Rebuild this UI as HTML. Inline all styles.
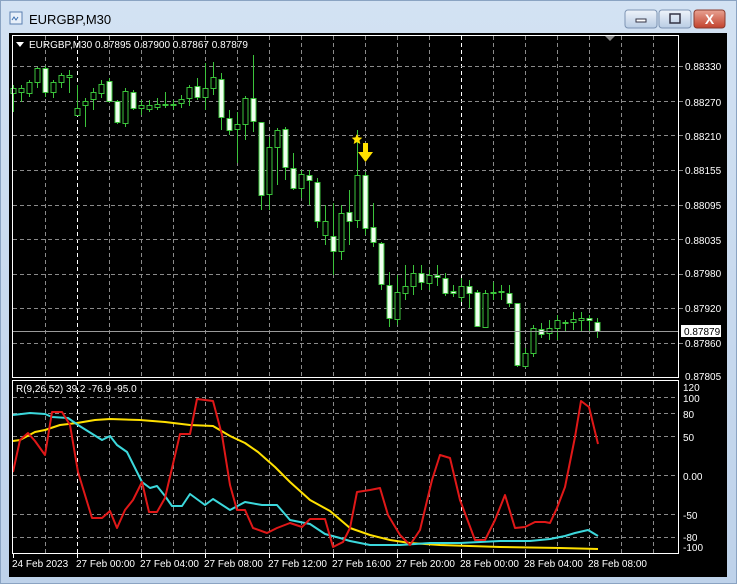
<!DOCTYPE html><html><head><meta charset="utf-8"><style>
html,body{margin:0;padding:0;background:#c6d7eb;width:737px;height:584px;overflow:hidden}
svg{display:block}
text{font-family:"Liberation Sans",sans-serif}
</style></head><body>
<svg id="s" width="737" height="584" viewBox="0 0 737 584" xmlns="http://www.w3.org/2000/svg">
<defs><linearGradient id="tb" x1="0" y1="0" x2="0" y2="1"><stop offset="0" stop-color="#d3e2f3"/><stop offset="1" stop-color="#bed2ea"/></linearGradient>
<linearGradient id="bt" x1="0" y1="0" x2="0" y2="1"><stop offset="0" stop-color="#eef3fa"/><stop offset="1" stop-color="#b9cce4"/></linearGradient>
<linearGradient id="cl" x1="0" y1="0" x2="0" y2="1"><stop offset="0" stop-color="#e8a393"/><stop offset="1" stop-color="#c2422d"/></linearGradient></defs>
<rect x="0" y="0" width="737" height="584" fill="url(#tb)"/>
<rect x="0.5" y="0.5" width="736" height="583" fill="none" stroke="#8aa3c2"/>
<rect x="10" y="12" width="12" height="12" fill="#e8f0fa" stroke="#5a7fb0"/>
<path d="M12 20 l2 -3 l2 3 l2 -3" stroke="#3b6fb0" fill="none"/>
<text x="29" y="24" font-size="13" fill="#000">EURGBP,M30</text>
<rect x="625" y="10" width="32" height="18" rx="3" fill="url(#bt)" stroke="#7d94b3"/>
<rect x="636" y="19" width="10" height="3" fill="#fff" stroke="#334"/>
<rect x="659" y="10" width="32" height="18" rx="3" fill="url(#bt)" stroke="#7d94b3"/>
<rect x="670" y="14" width="10" height="9" fill="none" stroke="#334" stroke-width="1.5"/>
<rect x="694" y="10" width="31" height="18" rx="3" fill="url(#cl)" stroke="#8b3b2e"/>
<text x="709.5" y="24" font-size="14" font-weight="bold" fill="#fff" text-anchor="middle">X</text>
<rect x="9" y="33" width="718" height="544" fill="#000"/>
<g id="grid" stroke="#8a8a8a" stroke-dasharray="4,3" stroke-width="1"></g>
<g id="ind" fill="none" stroke-width="2" stroke-linejoin="round"></g>
<g id="cand"></g>
<rect x="12.5" y="35.5" width="666" height="342" fill="none" stroke="#fff"/>
<rect x="12.5" y="380.5" width="666" height="173" fill="none" stroke="#fff"/>
<line x1="13" y1="331.5" x2="678" y2="331.5" stroke="#9a9a9a"/>
<path d="M16 42 h8 l-4 5z" fill="#fff"/>
<path d="M605 36 h10 l-5 5z" fill="#888"/>
<text x="29" y="48" font-size="10" fill="#fff">EURGBP,M30  0.87895 0.87900 0.87867 0.87879</text>
<text x="16" y="392" font-size="10" fill="#fff">R(9,26,52) 39.2 -76.9 -95.0</text>
<path d="M357 134 l1.6 3.4 3.7.4 -2.8 2.5 .8 3.7 -3.3 -1.9 -3.3 1.9 .8 -3.7 -2.8 -2.5 3.7 -.4z" fill="#ffe000"/>
<path d="M363 143 h5 v9 h5 l-7.5 10 l-7.5 -10 h5z" fill="#ffe000"/>
<g id="lab" font-size="10" fill="#fff"></g>
<rect x="681" y="325" width="40" height="12" fill="#fff"/>
<text x="684" y="335" font-size="10" fill="#000">0.87879</text>
</svg>
<script>
var NS="http://www.w3.org/2000/svg";
function el(p,t,a,tx){var e=document.createElementNS(NS,t);for(var k in a)e.setAttribute(k,a[k]);if(tx)e.textContent=tx;document.getElementById(p).appendChild(e);return e;}
for(var x=45;x<=653;x+=32){var c=(x==77||x==461)?"#fff":"#8a8a8a";el("grid","line",{x1:x+.5,y1:36,x2:x+.5,y2:377,stroke:c});el("grid","line",{x1:x+.5,y1:381,x2:x+.5,y2:553,stroke:c});}
[66,101,135,170,205,239,274,308,343].forEach(function(y){el("grid","line",{x1:13,y1:y+.5,x2:678,y2:y+.5});el("grid","line",{x1:679,y1:y+.5,x2:683,y2:y+.5,"stroke-dasharray":"none"});});
[397,413,436,475,514,537].forEach(function(y){el("grid","line",{x1:13,y1:y+.5,x2:678,y2:y+.5});});
var pl=[[66,"0.88330"],[102,"0.88270"],[136,"0.88210"],[170,"0.88155"],[205,"0.88095"],[240,"0.88035"],[273,"0.87980"],[308,"0.87920"],[343,"0.87860"],[376,"0.87805"]];
pl.forEach(function(p){el("lab","text",{x:685,y:p[0]+4},p[1]);});
[[387,"120"],[398,"100"],[414,"80"],[437,"50"],[476,"0.00"],[515,"-50"],[537,"-80"],[547,"-100"]].forEach(function(p){el("lab","text",{x:683,y:p[0]+4},p[1]);});
var tl=[[13,"24 Feb 2023"],[77,"27 Feb 00:00"],[141,"27 Feb 04:00"],[205,"27 Feb 08:00"],[269,"27 Feb 12:00"],[333,"27 Feb 16:00"],[397,"27 Feb 20:00"],[461,"28 Feb 00:00"],[525,"28 Feb 04:00"],[589,"28 Feb 08:00"]];
tl.forEach(function(p){el("lab","text",{x:p[0]-1,y:567},p[1]);el("grid","line",{x1:p[0]+.5,y1:553,x2:p[0]+.5,y2:558,stroke:"#fff","stroke-dasharray":"none"});});
var C=[[88,93,0,85,112],[88,92,0,85,102],[82,93,0,80,97],[68,82,0,67,88],[68,92,1,66,97],[82,92,0,80,98],[75,82,0,73,88],[75,77,0,70,93],[108,115,0,85,115],[101,105,0,98,127],[92,99,0,88,110],[84,93,0,80,98],[81,101,1,78,101],[101,122,1,100,124],[91,123,0,88,127],[92,108,1,90,110],[105,108,0,100,115],[105,109,0,100,112],[104,107,0,98,110],[104,105,1,92,108],[104,105,1,100,110],[99,103,0,95,108],[87,98,0,85,106],[86,97,1,78,100],[88,97,0,63,110],[77,88,0,62,95],[79,117,1,73,130],[118,130,1,110,135],[124,129,0,112,163],[98,124,0,96,140],[98,121,1,55,132],[122,195,1,122,210],[147,194,0,137,210],[130,147,0,128,185],[129,167,1,127,180],[168,188,1,153,190],[174,188,0,170,198],[175,180,1,170,205],[182,221,1,178,228],[221,235,0,205,245],[236,251,1,203,275],[213,251,0,205,260],[212,221,1,190,245],[175,220,0,130,228],[175,228,1,172,235],[227,242,1,203,247],[243,284,1,242,290],[285,318,1,272,327],[292,319,0,275,325],[286,293,0,265,300],[273,286,0,265,295],[273,282,1,265,290],[275,283,0,270,290],[275,277,1,265,286],[278,293,1,273,296],[291,293,1,285,297],[286,297,0,278,302],[286,293,1,280,308],[292,326,1,290,327],[293,327,0,290,328],[292,293,1,282,300],[291,292,1,285,300],[293,303,1,285,307],[303,365,1,303,367],[353,366,0,348,368],[328,353,0,325,357],[329,334,1,323,338],[328,333,0,320,340],[320,328,0,315,340],[322,322,0,320,332],[319,322,0,312,330],[318,320,0,312,331],[318,320,1,315,332],[322,331,1,318,338]];
C.forEach(function(c,i){var x=13+8*i;el("cand","line",{x1:x+.5,y1:c[3],x2:x+.5,y2:c[4],stroke:"#3bc43b"});
var h=Math.max(c[1]-c[0],1);el("cand","rect",{x:x-2,y:c[0]+.5,width:5,height:h,fill:c[2]?"#f0fff0":"#000",stroke:"#3bc43b"});});
function pl2(col,pts){el("ind","polyline",{points:pts.map(function(p){return p.join(",")}).join(" "),stroke:col});}
pl2("#ffe000",[[13,441],[20,440],[35,432],[45,430],[60,425],[77,423],[95,420],[110,419],[140,420],[165,422],[190,425],[213,426],[230,436],[245,443],[258,452],[275,467],[290,482],[310,500],[330,511],[350,528],[370,535],[390,540],[410,543],[440,545],[500,547],[560,548],[598,549]]);
pl2("#3cd8dc",[[13,415],[30,413],[45,414],[52,417],[68,418],[78,425],[102,440],[110,436],[117,445],[127,452],[142,482],[150,488],[157,486],[165,496],[172,506],[182,506],[190,494],[205,505],[213,499],[230,510],[245,502],[262,505],[277,505],[290,520],[300,522],[310,524],[325,534],[340,538],[350,541],[370,545],[400,545],[430,543],[460,543],[500,541],[530,541],[550,539],[565,536],[575,533],[588,530],[598,536]]);
pl2("#e01818",[[13,472],[20,440],[28,433],[35,441],[45,455],[52,412],[62,412],[70,425],[78,472],[92,518],[102,518],[110,511],[117,528],[125,510],[133,500],[142,482],[149,512],[157,512],[165,498],[180,434],[190,434],[197,399],[213,401],[222,435],[230,485],[237,510],[245,510],[253,528],[267,533],[277,528],[290,523],[302,527],[310,519],[325,519],[333,547],[343,542],[350,528],[357,492],[370,490],[380,488],[388,515],[400,535],[410,545],[420,530],[432,480],[440,455],[450,458],[460,500],[475,540],[485,540],[495,520],[505,495],[515,528],[525,527],[535,522],[545,522],[550,523],[557,508],[565,487],[575,437],[581,401],[589,407],[598,444]]);
</script>
</body></html>
